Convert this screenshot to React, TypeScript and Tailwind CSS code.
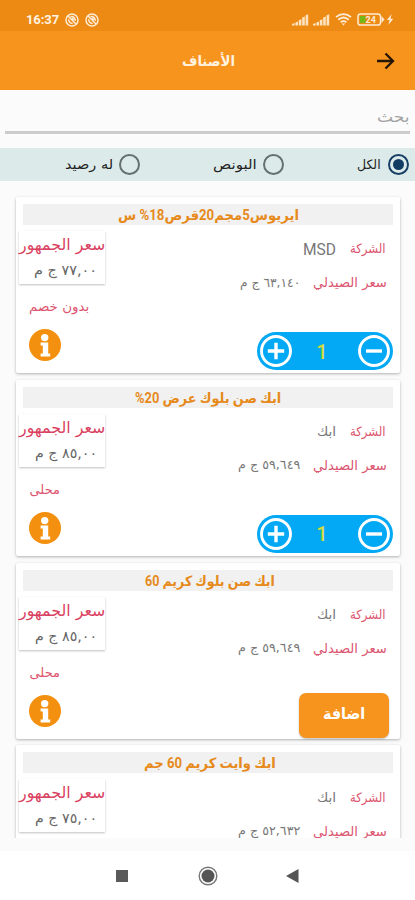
import { useLayoutEffect, useRef, useState } from "react";

type FitProps = { text: string; w: number; className?: string };

// One line of text condensed or widened to take exactly `w` pixels.
function Fit({ text, w, className = "" }: FitProps) {
  const ref = useRef<HTMLSpanElement>(null);
  const [scale, setScale] = useState(1);
  useLayoutEffect(() => {
    if (ref.current) setScale(w / ref.current.offsetWidth);
  }, [w, text]);
  return (
    <span className={"flex shrink-0 justify-start " + className} style={{ width: w }}>
      <span
        ref={ref}
        className="inline-block shrink-0 origin-right whitespace-nowrap"
        style={{ transform: `scaleX(${scale})` }}
      >
        {text}
      </span>
    </span>
  );
}

function Signal() {
  return (
    <svg width="17" height="12" viewBox="0 0 17 12" fill="#fde3c0">
      <path d="M0 11.5v-1.5l2.600-1v2.500zM3.400 11.500V8.600l2.600-1v3.900zM6.800 11.500V6.200l2.600-1v6.300zM10.200 11.500V3.400l2.600-1v9.100zM13.600 11.500V1.200L16.200 .3v11.200z" />
    </svg>
  );
}

function Blocked() {
  return (
    <svg width="14" height="14" viewBox="0 0 14 14" fill="none" stroke="#fdebd5" strokeWidth="1.5">
      <circle cx="7" cy="7" r="6" />
      <path d="M3 3l8 8M5.5 3.7c3-.6 5 1.5 4.700 4.200M3.700 6.200c0 2.500 1.500 4 4 4.200M7 5l2 2" />
    </svg>
  );
}

function StatusBar() {
  return (
    <div dir="ltr" className="flex h-[31px] shrink-0 items-start bg-[#ec8a13] pt-[13px] pl-[26px] text-[#fff3e2]">
      <span className="w-[34px] font-[Roboto] text-[13px] leading-[14px] font-bold tracking-[-0.1px]">16:37</span>
      <div className="ml-[5px] flex gap-[6px]">
        <Blocked />
        <Blocked />
      </div>
      <div className="ml-[193px] flex items-center gap-[4px]">
        <Signal />
        <Signal />
        <svg className="ml-px" width="17" height="13" viewBox="0 0 17 13" fill="none" stroke="#fdebd5" strokeWidth="1.8">
          <path d="M1 4.200c4.400-4 10.600-4 15 0M3.300 6.800c3.200-2.800 7.200-2.800 10.400 0M5.700 9.300c1.800-1.500 3.800-1.500 5.600 0" />
          <path d="M6.800 10.400h3.400L8.500 12.600z" fill="#fdebd5" stroke="none" />
        </svg>
        <svg className="ml-px" width="38" height="13" viewBox="0 0 38 13">
          <rect x="1" y="1" width="22.500" height="11" rx="2.600" fill="none" stroke="#fdebd5" strokeWidth="1.500" />
          <path d="M24.500 3l3 3.500-3 3.500z" fill="#fdebd5" />
          <rect x="3" y="3" width="5.500" height="7" fill="#74b817" />
          <text x="8.500" y="9.900" fontFamily="Roboto" fontSize="9" fontWeight="700" fill="#fdebd5">24</text>
          <path d="M34.500 1l-4.500 6h2.600l-1.300 5 5-6.300h-2.800z" fill="#fdebd5" />
        </svg>
      </div>
    </div>
  );
}

function Radio({ on = false }: { on?: boolean }) {
  return (
    <span
      className={
        "flex size-[21px] shrink-0 items-center justify-center rounded-full border-2 " +
        (on ? "border-[#173f66]" : "border-[#66706f]")
      }
    >
      {on && <span className="size-[11px] rounded-full bg-[#123b63]" />}
    </span>
  );
}

function Info() {
  return (
    <svg width="32" height="32" viewBox="0 0 32 32">
      <circle cx="16" cy="16" r="16" fill="#f4900f" />
      <circle cx="15.700" cy="8.600" r="3.700" fill="#fff" />
      <path d="M11.600 13.500h7.600v11h2v2.900h-9.600v-2.900h2.200v-8h-2.200z" fill="#fff" />
    </svg>
  );
}

function Round({ plus = false }: { plus?: boolean }) {
  return (
    <svg width="32" height="32" viewBox="0 0 32 32" fill="none" stroke="#fff">
      <circle cx="16" cy="16" r="14.500" strokeWidth="2.900" />
      <path d={plus ? "M7.800 16h16.400M16 7.800v16.400" : "M8 16h16"} strokeWidth="3.400" />
    </svg>
  );
}

type Item = {
  title: string;
  titleW: number;
  titleEnd: string;
  company: string;
  companyW: number;
  cost: string;
  costW: number;
  price: string;
  priceW: number;
  note?: string;
  noteW: number;
  action?: "count" | "add";
};

const items: Item[] = [
  { title: "ايريوس5مجم20قرص18% س", titleW: 181, titleEnd: "pr-[94px]", company: "MSD", companyW: 33, cost: "٦٣,١٤٠ ج م", costW: 60, price: "٧٧,٠٠ ج م", priceW: 63, note: "بدون خصم", noteW: 60, action: "count" },
  { title: "ابك صن بلوك عرض 20%", titleW: 146, titleEnd: "pr-[112px]", company: "ابك", companyW: 19, cost: "٥٩,٦٤٩ ج م", costW: 62, price: "٨٥,٠٠ ج م", priceW: 62, note: "محلى", noteW: 31, action: "count" },
  { title: "ابك صن بلوك كريم 60", titleW: 130, titleEnd: "pr-[118px]", company: "ابك", companyW: 19, cost: "٥٩,٦٤٩ ج م", costW: 62, price: "٨٥,٠٠ ج م", priceW: 62, note: "محلى", noteW: 31, action: "add" },
  { title: "ابك وايت كريم 60 جم", titleW: 132, titleEnd: "pr-[117px]", company: "ابك", companyW: 19, cost: "٥٢,٦٣٢ ج م", costW: 62, price: "٧٥,٠٠ ج م", priceW: 62, noteW: 31 },
];

function Card({ item }: { item: Item }) {
  return (
    <article className="h-[176px] shrink-0 rounded-[2px] bg-white px-[7px] pt-[7px] shadow-[0_1px_3px_rgba(0,0,0,0.3)]">
      <h2
        className={
          "flex h-[21px] items-center bg-[#f1f1f1] pt-[2px] font-[Roboto,'DejaVu_Sans',sans-serif] text-[14px] font-bold text-[#e68a1c] " +
          item.titleEnd
        }
      >
        <Fit text={item.title} w={item.titleW} />
      </h2>
      <div className="flex justify-between">
        <div className="pt-[14px]">
          <div className="flex h-[20px] items-center pr-[7px]">
            <Fit text="الشركة" w={36} className="text-[13px] text-[#dc5570]" />
            <Fit
              text={item.company}
              w={item.companyW}
              className={"mr-[14px] text-[#777] " + (item.company === "MSD" ? "pt-[2px] font-[Roboto] text-[16px]" : "text-[13px]")}
            />
          </div>
          <div className="mt-[14px] flex h-[20px] items-center pr-[6px]">
            <Fit text="سعر الصيدلي" w={74} className="text-[13px] text-[#dc5570]" />
            <Fit text={item.cost} w={item.costW} className="mr-[13px] text-[12.500px] text-[#777]" />
          </div>
          {item.action === "count" && (
            <div className="mt-[39px] flex h-[38px] w-[136px] items-center justify-between rounded-full bg-[#03a9f4] px-[3px]">
              <Round />
              <span className="mr-[6px] pt-[1px] font-[Roboto] text-[20px] font-medium text-[#d3dc3c]">1</span>
              <Round plus />
            </div>
          )}
          {item.action === "add" && (
            <button className="mt-[34px] mr-[4px] flex h-[45px] w-[90px] justify-center rounded-[7px] bg-[#f7941e] pt-[9px] text-[16px] font-bold text-white shadow-[0_1px_2px_rgba(0,0,0,0.25)]">
              <Fit text="اضافة" w={42} />
            </button>
          )}
        </div>
        <div className="-ml-[4px] flex w-[86px] flex-col pt-[6px]">
          <div className="h-[53px] bg-white shadow-[0_1px_2px_rgba(0,0,0,0.25)]">
            <div className="flex h-[28px] items-center">
              <Fit text="سعر الجمهور" w={86} className="text-[16px] text-[#da3f5f]" />
            </div>
            <div className="flex h-[23px] items-center pr-[8px]">
              <Fit text={item.price} w={item.priceW} className="text-[14px] text-[#666]" />
            </div>
          </div>
          {item.note && (
            <>
              <div dir="ltr" className="mt-[13px] flex h-[20px] items-center pl-[10px]">
                <div dir="rtl">
                  <Fit text={item.note} w={item.noteW} className="text-[13px] text-[#dc5570]" />
                </div>
              </div>
              <div dir="ltr" className="mt-[12px] pl-[10px]">
                <Info />
              </div>
            </>
          )}
        </div>
      </div>
    </article>
  );
}

export default function App() {
  return (
    <div
      dir="rtl"
      className="flex h-[900px] w-[415px] flex-col overflow-hidden bg-[#fbfbfb] font-['DejaVu_Sans',sans-serif]"
    >
      <StatusBar />
      <header className="flex h-[59px] shrink-0 items-center bg-[#f7941e] pr-[20px]">
        <svg width="19" height="18" viewBox="0 0 19 18" fill="none" stroke="#251604" strokeWidth="2.300">
          <path d="M1 9h16M9.500 1.500L17 9l-7.500 7.500" />
        </svg>
        <h1 className="mr-[141px] pt-[2px] text-[15px] font-bold text-[#fff3e0]">
          <Fit text="الأصناف" w={53} />
        </h1>
      </header>
      <div className="mx-[5px] flex h-[44px] shrink-0 items-end border-b-[3px] border-[#cccccc] pb-[3px]">
        <Fit text="بحث" w={33} className="text-[15px] text-[#a3a3a3]" />
      </div>
      <div className="mt-[14px] flex h-[33px] shrink-0 items-center bg-[#dcebea] pr-[6px] text-[13px] text-[#222]">
        <Radio on />
        <Fit text="الكل" w={24} className="mr-[7px]" />
        <span className="w-[73px]" />
        <Radio />
        <Fit text="البونص" w={44} className="mr-[6px]" />
        <span className="w-[73px]" />
        <Radio />
        <Fit text="له رصيد" w={48} className="mr-[6px]" />
      </div>
      <main className="flex h-[657px] shrink-0 flex-col gap-[6.800px] overflow-hidden pt-[16px] pr-[15px] pl-[16px]">
        {items.map((item) => (
          <Card key={item.title} item={item} />
        ))}
      </main>
      <div className="h-[13px] shrink-0" />
      <nav dir="ltr" className="flex h-[49px] shrink-0 items-center bg-white pl-[116px]">
        <span className="size-[12px] bg-[#5a5a5a]" />
        <svg className="ml-[70px]" width="20" height="20" viewBox="0 0 20 20">
          <circle cx="10" cy="10" r="8.800" fill="none" stroke="#777" strokeWidth="1.400" />
          <circle cx="10" cy="10" r="6.500" fill="#555" />
        </svg>
        <svg className="ml-[68px]" width="13" height="14" viewBox="0 0 13 14">
          <path d="M0 7L12.500 0v14z" fill="#555" />
        </svg>
      </nav>
    </div>
  );
}
